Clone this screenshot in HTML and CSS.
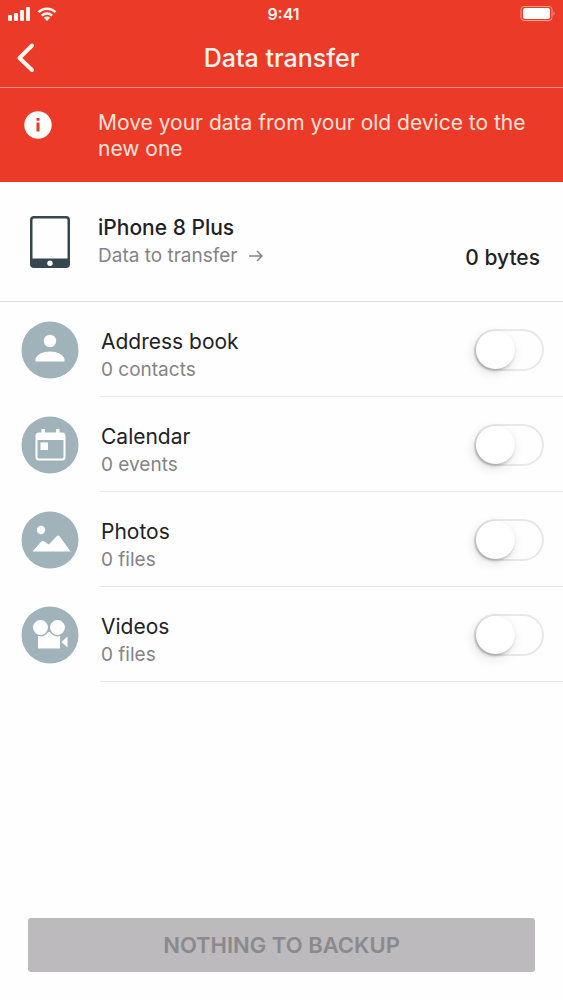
FILE: index.html
```html
<!DOCTYPE html>
<html lang="en">
<head>
<meta charset="utf-8">
<meta name="viewport" content="width=device-width, initial-scale=1">
<title>Data transfer</title>
<link rel="stylesheet" href="styles.css">
</head>
<body>
<div class="screen">
  <header class="top">
    <div class="status">
      <div class="status-left">
        <svg class="signal" viewBox="0 0 22 14" aria-hidden="true"><rect x="0" y="8" width="4" height="6" rx="1"/><rect x="6" y="6" width="4" height="8" rx="1"/><rect x="12" y="3" width="4" height="11" rx="1"/><rect x="18" y="0" width="4" height="14" rx="1"/></svg>
        <svg class="wifi" viewBox="0 0 20 14" aria-hidden="true"><path d="M1.500 5.200a12 12 0 0 1 17 0M4.800 8.600a7.400 7.400 0 0 1 10.400 0"/><path class="solid" d="M10 14l-3.200-3.300a4.600 4.600 0 0 1 6.400 0z"/></svg>
      </div>
      <span class="time">9:41</span>
      <div class="status-right">
        <svg class="battery" viewBox="0 0 35 16" aria-hidden="true"><rect class="case" x="1" y=".5" width="31" height="14" rx="3"/><rect x="3" y="2" width="27" height="11" rx="2"/><path class="cap" d="M33.500 5.500v4c1.500-.5 1.500-3.500 0-4z"/></svg>
      </div>
    </div>
    <nav class="nav">
      <button class="back" type="button" aria-label="Back"><svg viewBox="0 0 18 30" aria-hidden="true"><path d="M16 2.500L3.500 15 16 27"/></svg></button>
      <h1 class="title">Data transfer</h1>
    </nav>
  </header>
  <section class="banner">
    <svg class="info" viewBox="0 0 28 30" aria-hidden="true"><circle cx="14" cy="15" r="13.700"/><path d="M12.500 8h3v2.800h-3zM12.500 12.500h3v9h-3z"/></svg>
    <p class="banner-text">Move your data from your old device to the new one</p>
  </section>
  <main class="content">
    <section class="device">
      <svg class="tablet" viewBox="0 0 40 52" aria-hidden="true"><path fill-rule="evenodd" d="M4 0h32a4 4 0 0 1 4 4v44a4 4 0 0 1-4 4H4a4 4 0 0 1-4-4V4a4 4 0 0 1 4-4zM4 2.500a1.500 1.500 0 0 0-1.500 1.500v38.500h35V4a1.500 1.500 0 0 0-1.500-1.500z"/><circle cx="20" cy="47.300" r="2.700"/></svg>
      <div class="labels">
        <h2 class="device-name">iPhone 8 Plus</h2>
        <p class="sub">Data to transfer <svg class="arrow" viewBox="0 0 14 12" aria-hidden="true"><path d="M0 6h13M8 1l5 5-5 5"/></svg></p>
      </div>
      <span class="size">0 bytes</span>
    </section>
    <ul class="list">
      <li class="row">
        <svg class="icon" viewBox="0 0 58 58" aria-hidden="true"><circle class="disc" cx="29" cy="29" r="28.500"/><circle cx="29" cy="20" r="6.200"/><path d="M14.500 40.500V38c1-4.500 7.500-7.500 14.500-7.500s13.500 3 14.500 7.500v2.500z"/></svg>
        <div class="cell">
          <label class="labels" for="address-book"><span class="name">Address book</span><span class="sub">0 contacts</span></label>
          <input class="switch" id="address-book" type="checkbox" role="switch">
        </div>
      </li>
      <li class="row">
        <svg class="icon" viewBox="0 0 58 58" aria-hidden="true"><circle class="disc" cx="29" cy="29" r="28.500"/><path fill-rule="evenodd" d="M18 16.500h2.500V13h3.500v3.500h11V13h3.500v3.500H41a3.500 3.500 0 0 1 3.500 3.500v21a3.500 3.500 0 0 1-3.500 3.500H18a3.500 3.500 0 0 1-3.500-3.500V20a3.500 3.500 0 0 1 3.500-3.500zM16.500 24v17a1.500 1.500 0 0 0 1.500 1.500h23a1.500 1.500 0 0 0 1.500-1.500V24z"/><rect x="19.500" y="26.500" width="7.500" height="7.500"/></svg>
        <div class="cell">
          <label class="labels" for="calendar"><span class="name">Calendar</span><span class="sub">0 events</span></label>
          <input class="switch" id="calendar" type="checkbox" role="switch">
        </div>
      </li>
      <li class="row">
        <svg class="icon" viewBox="0 0 58 58" aria-hidden="true"><circle class="disc" cx="29" cy="29" r="28.500"/><circle cx="20" cy="19" r="4.200"/><path d="M11.500 40.500l9.200-10.500 1.500-.2 5.500 3.700 8.300-8.500q1.200-1 2.400 0L49.500 40.500z"/></svg>
        <div class="cell">
          <label class="labels" for="photos"><span class="name">Photos</span><span class="sub">0 files</span></label>
          <input class="switch" id="photos" type="checkbox" role="switch">
        </div>
      </li>
      <li class="row">
        <svg class="icon" viewBox="0 0 58 58" aria-hidden="true"><circle class="disc" cx="29" cy="29" r="28.500"/><path d="M17 26h22v16.500H17z"/><circle class="reel" cx="19.500" cy="21.500" r="8.200"/><circle class="reel" cx="36.500" cy="21.500" r="8.200"/><path d="M40.500 36l6-5.500v11z"/></svg>
        <div class="cell">
          <label class="labels" for="videos"><span class="name">Videos</span><span class="sub">0 files</span></label>
          <input class="switch" id="videos" type="checkbox" role="switch">
        </div>
      </li>
    </ul>
  </main>
  <footer class="footer">
    <button class="backup" type="button" disabled>NOTHING TO BACKUP</button>
  </footer>
</div>
</body>
</html>
```
FILE: styles.css
```css
* {
  box-sizing: border-box;
}

body {
  margin: 0;
  background: #fefefe;
  color: #222126;
  font-family: Inter, "Liberation Sans", sans-serif;
}

h1, h2, p, ul {
  margin: 0;
  padding: 0;
}

button {
  border: 0;
  font-family: inherit;
}

svg {
  display: block;
  flex: none;
}

.screen {
  display: flex;
  flex-direction: column;
  min-height: 100vh;
}

.top {
  background: #eb3a28;
  color: #fff4ee;
  border-bottom: 1px solid #f69482;
}

.status {
  display: grid;
  grid-template-columns: 1fr auto 1fr;
  align-items: center;
  height: 28px;
  padding: 0 8px;
}

.status-left {
  display: flex;
  gap: 7px;
}

.status-right {
  display: flex;
  justify-content: flex-end;
}

.signal {
  width: 22px;
  height: 14px;
  fill: currentColor;
}

.wifi {
  width: 20px;
  height: 14px;
  fill: none;
  stroke: currentColor;
  stroke-width: 2.5;
}

.wifi .solid {
  fill: currentColor;
  stroke: none;
}

.time {
  padding-left: 4px;
  font-size: 16px;
  font-weight: 600;
}

.battery {
  width: 35px;
  height: 16px;
  fill: #fff;
}

.battery .case {
  fill: none;
  stroke: #f8a294;
}

.battery .cap {
  fill: #f8a294;
}

.nav {
  display: grid;
  grid-template-columns: 1fr auto 1fr;
  align-items: center;
  height: 59px;
  padding: 0 16px;
}

.back {
  justify-self: start;
  padding: 0;
  background: none;
  color: inherit;
}

.back svg {
  width: 18px;
  height: 30px;
  fill: none;
  stroke: currentColor;
  stroke-width: 4;
  stroke-linecap: round;
  stroke-linejoin: round;
}

.title {
  font-size: 25px;
  font-weight: 500;
  line-height: 30px;
}

.banner {
  display: flex;
  gap: 46px;
  padding: 22px 24px 20px;
  background: #eb3a28;
  color: #ffe3da;
}

.info {
  width: 28px;
  height: 30px;
  fill: #fff;
}

.info path {
  fill: #eb3a28;
}

.banner-text {
  font-size: 21px;
  line-height: 26px;
}

.content {
  flex: 1;
}

.device {
  display: flex;
  align-items: center;
  min-height: 120px;
  padding: 1px 23px 0 30px;
  border-bottom: 1px solid #dededf;
}

.tablet {
  width: 40px;
  height: 52px;
  margin-right: 28px;
  fill: #37474f;
}

.tablet circle {
  fill: #fff;
}

.labels {
  display: flex;
  flex: 1;
  flex-direction: column;
}

.device-name,
.size {
  font-size: 21px;
  font-weight: 500;
  line-height: 28px;
}

.size {
  align-self: flex-end;
  margin-bottom: 29px;
}

.name {
  font-size: 21px;
  line-height: 28px;
}

.sub {
  display: flex;
  align-items: center;
  gap: 12px;
  color: #848387;
  font-size: 19px;
  line-height: 28px;
}

.arrow {
  width: 14px;
  height: 12px;
  fill: none;
  stroke: currentColor;
  stroke-width: 1.5;
}

.list {
  list-style: none;
}

.row {
  display: flex;
  align-items: center;
  gap: 21px;
  padding-left: 21px;
}

.icon {
  width: 58px;
  height: 58px;
  fill: #fff;
}

.icon .disc {
  fill: #a0b2ba;
}

.icon .reel {
  stroke: #a0b2ba;
  stroke-width: 1.5;
}

.cell {
  display: flex;
  flex: 1;
  align-items: center;
  min-height: 95px;
  padding: 14px 19px 0 1px;
  border-bottom: 1px solid #e9e9ea;
}

.switch {
  flex: none;
  width: 70px;
  height: 42px;
  margin: 0 0 12px;
  border: 2px solid #e8e7e9;
  border-radius: 21px;
  appearance: none;
  background: #fefefe;
}

.switch::before {
  display: block;
  width: 39px;
  height: 38px;
  border-radius: 50%;
  background: #fff;
  box-shadow: -1px 2px 3px rgba(40, 30, 40, 0.25), -2px 4px 12px rgba(40, 30, 40, 0.12);
  content: "";
}

.switch:checked {
  background: #eb3a28;
}

.switch:checked::before {
  margin-left: auto;
}

.footer {
  padding: 28px;
}

.backup {
  display: block;
  width: 100%;
  height: 54px;
  border-radius: 3px;
  background: #bcbabd;
  color: #8b898d;
  font-size: 22px;
  font-weight: 600;
}
```
